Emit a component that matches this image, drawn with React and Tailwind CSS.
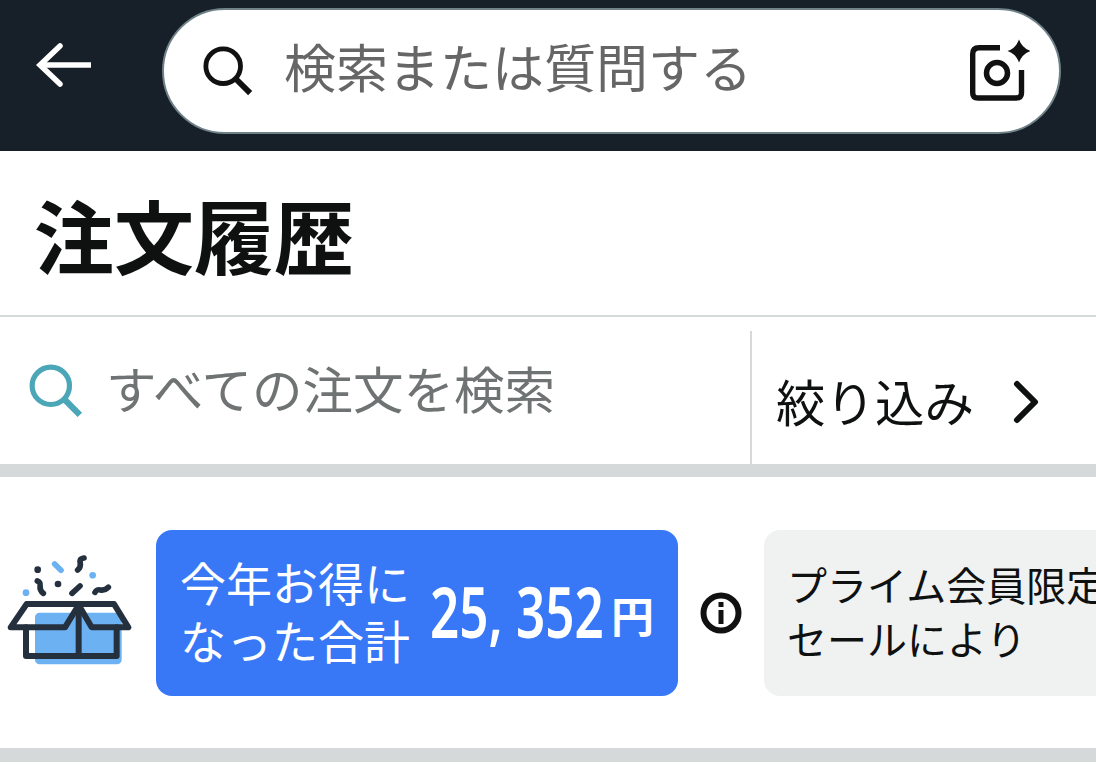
import React from "react";
import { ChevronRight } from "lucide-react";

const jp = "font-['Noto_Sans_CJK_JP','Noto_Sans',sans-serif]";

const SearchIcon = ({ className }) => (
  <svg viewBox="0 0 54 54" fill="none" stroke="currentColor" className={className}>
    <circle cx="22" cy="22" r="18" strokeWidth="5" />
    <path d="M35 35 L50 50" strokeWidth="6" />
  </svg>
);

const BackArrow = () => (
  <svg viewBox="0 0 60 48" fill="none" stroke="#fff" strokeWidth="5.5" className="w-[60px] h-[48px] shrink-0">
    <path d="M57 24 H6" />
    <path d="M26 5 L6 24 L26 43" strokeLinecap="round" />
  </svg>
);

const CameraSparkIcon = () => (
  <svg viewBox="0 0 60 62" fill="none" className="w-[60px] h-[62px] shrink-0 -mt-[3px]">
    <path d="M30 8.7 H9 Q2.7 8.7 2.7 15 V54 Q2.7 59 8 59 H46 Q51.5 59 51.5 54 V31" stroke="#111" strokeWidth="5.4" />
    <circle cx="27" cy="34" r="10.5" stroke="#111" strokeWidth="5.5" />
    <path d="M49 0.5 Q52 9 60.5 12 Q52 15 49 23.5 Q46 15 37.5 12 Q46 9 49 0.5 Z" fill="#111" />
  </svg>
);

const BoxIcon = () => (
  <svg viewBox="0 0 468 558" fill="none" className="w-[156px] h-[186px] shrink-0">
    <rect x="105" y="278" width="260" height="155" rx="14" fill="#6cb2f2" />
    <g stroke="#25303f" strokeWidth="18" strokeLinejoin="round" strokeLinecap="round">
      <path d="M80 252 H342 L385 322 H275 L236 255 L195 322 H32 Z" />
      <path d="M78 322 V408 H350 V322" />
      <path d="M236 255 V408" />
    </g>
    <g stroke="#25303f" strokeWidth="17" strokeLinecap="round">
      <path d="M252 114 C226 118 254 134 233 150" />
      <path d="M112 183 C132 190 108 205 130 220" />
      <path d="M240 198 L216 220" />
      <path d="M285 217 C296 198 305 222 325 202" />
    </g>
    <circle cx="113" cy="149" r="10" fill="#25303f" />
    <circle cx="174" cy="192" r="10" fill="#25303f" />
    <circle cx="278" cy="166" r="10" fill="#6cb2f2" />
    <circle cx="78" cy="218" r="10" fill="#6cb2f2" />
    <path d="M164 132 L183 151" stroke="#6cb2f2" strokeWidth="17" strokeLinecap="round" />
  </svg>
);

const InfoIcon = () => (
  <svg viewBox="0 0 42 42" className="w-[42px] h-[42px] shrink-0">
    <circle cx="21" cy="21" r="17.5" fill="none" stroke="#111" strokeWidth="6" />
    <rect x="18.5" y="18" width="5" height="14" fill="#111" />
    <rect x="18.5" y="10" width="5" height="5" fill="#111" />
  </svg>
);

export default function App() {
  return (
    <div className={`w-[1096px] h-[778px] overflow-hidden bg-white ${jp}`}>
      {/* Top bar */}
      <div className="h-[151px] bg-[#171f29] flex items-start">
        <div className="w-[162px] h-[129px] flex items-center shrink-0 pl-[34px]">
          <BackArrow />
        </div>
        <div className="mt-[8px] w-[899px] h-[126px] rounded-full bg-white border-2 border-[#6f8288] flex items-center pl-[38px] pr-[29px]">
          <SearchIcon className="w-[52px] h-[52px] text-[#111] shrink-0" />
          <span className="ml-[30px] text-[52px] leading-none text-[#666] whitespace-nowrap flex-1 -mt-[10px]">検索または質問する</span>
          <CameraSparkIcon />
        </div>
      </div>

      {/* Title */}
      <div className="h-[166px] flex items-center pl-[34px] border-b-2 border-[#d5d9d9]">
        <h1 className="text-[80px] leading-none font-bold text-[#0f1111]">注文履歴</h1>
      </div>

      {/* Search and filter */}
      <div className="h-[147px] flex">
        <div className="w-[750px] flex items-center pl-[28px]">
          <SearchIcon className="w-[56px] h-[56px] text-[#4ba6b8] shrink-0" />
          <span className="ml-[22px] text-[50.5px] leading-none text-[#6f7373] whitespace-nowrap -mt-[6px]">すべての注文を検索</span>
        </div>
        <div className="mt-[14px] flex-1 border-l-2 border-[#d5d9d9] flex items-center pl-[24px]">
          <span className="text-[49.5px] leading-none text-[#0f1111] whitespace-nowrap mt-[6px]">絞り込み</span>
          <ChevronRight size={72} strokeWidth={2} className="text-[#0f1111] ml-[16px] mt-[8px] shrink-0" />
        </div>
      </div>
      <div className="h-[13px] bg-[#d5d9d9]" />

      {/* Savings */}
      <div className="h-[271px] flex items-center">
        <BoxIcon />
        <div className="w-[522px] h-[166px] rounded-2xl bg-[#3878f7] flex items-center pl-[24px] text-white shrink-0">
          <div className="text-[46px] leading-[58px] whitespace-nowrap w-[250px] -mt-[5px]">
            今年お得に<br />なった合計
          </div>
          <div className="flex items-center -mt-[4px]">
            <span className="w-[181px] text-[71px] leading-none font-semibold whitespace-nowrap origin-left scale-x-[0.72] font-['Noto_Sans',sans-serif]">25, 352</span>
            <span className="text-[43px] leading-none font-semibold whitespace-nowrap mt-[8px]">円</span>
          </div>
        </div>
        <div className="w-[86px] flex justify-center shrink-0">
          <InfoIcon />
        </div>
        <div className="w-[400px] h-[166px] rounded-l-2xl bg-[#f0f2f2] shrink-0 pl-[23px] pt-[27px] text-[40px] leading-[54px] text-[#0f1111] whitespace-nowrap">
          プライム会員限定<br />セールにより
        </div>
      </div>
      <div className="h-[14px] bg-[#d5d9d9]" />
    </div>
  );
}
